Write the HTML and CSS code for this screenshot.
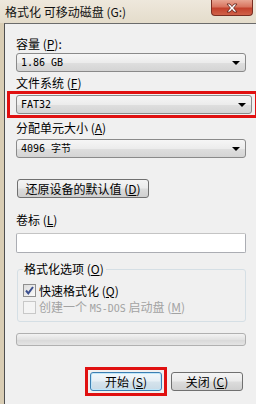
FILE: index.html
```html
<!DOCTYPE html>
<html lang="zh-CN">
<head>
<meta charset="utf-8">
<link rel="stylesheet" href="styles.css">
</head>
<body>
<div class="window">
  <div class="titlebar">
    <span class="title">格式化 可移动磁盘 (G:)</span>
    <div class="close">
      <svg width="42" height="16" viewBox="0 0 42 16">
        <path d="M16 4 L19 4 L21 6.5 L23 4 L26 4 L22.6 8 L26 12 L23 12 L21 9.5 L19 12 L16 12 L19.4 8 Z" fill="#fff" stroke="#5a1d14" stroke-width="0.8" stroke-linejoin="round"/>
      </svg>
    </div>
  </div>
  <div class="frame">
    <div class="content">
      <div class="label">容量 (<u>P</u>):</div>
      <div class="combo"><span class="val">1.86 GB</span><span class="arrow"></span></div>
      <div class="label l2">文件系统 (<u>F</u>)</div>
      <div class="hilite">
        <div class="combo"><span class="val">FAT32</span><span class="arrow"></span></div>
      </div>
      <div class="label l3">分配单元大小 (<u>A</u>)</div>
      <div class="combo c3"><span class="val">4096 字节</span><span class="arrow"></span></div>
      <div class="btn restore">还原设备的默认值 (<u>D</u>)</div>
      <div class="label l4">卷标 (<u>L</u>)</div>
      <div class="textbox"></div>
      <fieldset class="group">
        <legend>格式化选项 (<u>O</u>)</legend>
        <div class="row r1"><span class="cb checked"><svg width="11" height="11" viewBox="0 0 11 11"><path d="M2 5.5 L4.3 8.3 L9 2" fill="none" stroke="#3b4f8e" stroke-width="2"/></svg></span><span>快速格式化 (<u>Q</u>)</span></div>
        <div class="row r2 disabled"><span class="cb"></span><span>创建一个 <span class="mono">MS-DOS</span> 启动盘 (<u>M</u>)</span></div>
      </fieldset>
      <div class="progress"></div>
      <div class="buttons">
        <div class="redbox"><div class="btn act start">开始 (<u>S</u>)</div></div>
        <div class="btn act">关闭 (<u>C</u>)</div>
      </div>
    </div>
  </div>
</div>
</body>
</html>
```
FILE: styles.css
```css
html, body {
  margin: 0;
  padding: 0;
}
body {
  width: 256px;
  height: 404px;
  overflow: hidden;
  font-family: "Noto Sans CJK SC", "Noto Sans", sans-serif;
  font-size: 12px;
  color: #000;
}
.window {
  width: 256px;
  height: 404px;
  display: flex;
  flex-direction: column;
  background: #d9cdb4;
}
.titlebar {
  height: 23px;
  flex: none;
  display: flex;
  align-items: flex-start;
  padding-left: 5px;
  background: linear-gradient(#eee8dc, #e4dccb);
}
.title {
  line-height: 24px;
  font-size: 12px;
  color: #111;
}
.close {
  margin-left: auto;
  margin-right: 3px;
  width: 40px;
  height: 15px;
  border: 1px solid #7a2e22;
  border-top: none;
  border-radius: 0 0 4px 4px;
  background: linear-gradient(#e8a592 0%, #d87560 45%, #c3412c 55%, #d0624a 100%);
  overflow: hidden;
}
.close svg {
  display: block;
  margin-left: -1px;
}
.frame {
  flex: 1;
  margin-left: 4px;
  border-left: 1px solid #4f4f4f;
  border-top: 1px solid #6b6b6b;
  background: #f0f0f0;
  display: flex;
  flex-direction: column;
}
.content {
  padding: 13px 10px 0 11px;
  display: flex;
  flex-direction: column;
}
.label {
  line-height: 14px;
  height: 14px;
  white-space: nowrap;
}
.label u, .btn u, legend u, .row u {
  text-decoration: underline;
  text-underline-offset: 1px;
}
.combo {
  margin-top: 2px;
  height: 17px;
  border: 1px solid #8a8a8a;
  border-radius: 3px;
  background: linear-gradient(#f6f6f6 0%, #ececec 50%, #dedede 55%, #d4d4d4 100%);
  display: flex;
  align-items: center;
  padding-left: 4px;
}
.val {
  font-family: "DejaVu Sans Mono", "Noto Sans CJK SC", monospace;
  font-size: 10px;
  line-height: 17px;
}
.arrow {
  margin-left: auto;
  margin-right: 5px;
  width: 0;
  height: 0;
  border-left: 4px solid transparent;
  border-right: 4px solid transparent;
  border-top: 4px solid #000;
}
.l2 { margin-top: 4px; }
.hilite {
  margin-top: 1px;
  margin-left: -9px;
  width: 236px;
  border: 3px solid #e01010;
  padding: 1px 3px 1px 6px;
}
.hilite .combo { margin-top: 0; }
.l3 { margin-top: 3px; }
.c3 { margin-top: 4px; }
.btn {
  height: 17px;
  border: 1px solid #707070;
  border-radius: 3px;
  background: linear-gradient(#f4f4f4 0%, #ebebeb 48%, #dcdcdc 52%, #cfcfcf 100%);
  display: flex;
  align-items: center;
  justify-content: center;
  line-height: 17px;
  white-space: nowrap;
}
.restore {
  margin-top: 21px;
  width: 130px;
  margin-left: 1px;
}
.l4 { margin-top: 15px; }
.textbox {
  margin-top: 6px;
  height: 18px;
  border: 1px solid #abadb3;
  border-top-color: #c4c4c4;
  background: #fff;
  border-radius: 2px;
}
.group {
  margin: 9px 0 0 1px;
  padding: 0 0 6px 5px;
  border: 1px solid #d5dfe5;
  border-radius: 3px;
  min-inline-size: 0;
}
.group legend {
  padding: 0 2px 0 1px;
  line-height: 14px;
  height: 14px;
}
.row {
  height: 15px;
  display: flex;
  align-items: center;
  gap: 3px;
  line-height: 15px;
  white-space: nowrap;
}
.r1 { margin-top: 7px; }
.r2 { margin-top: 2px; }
.cb {
  width: 11px;
  height: 11px;
  border: 1px solid #8f8f8f;
  background: linear-gradient(135deg, #dcdcdc, #fafafa);
  display: flex;
  align-items: center;
  justify-content: center;
}
.disabled { color: #a3a3a3; }
.disabled .cb {
  border-color: #c8c8c8;
  background: #f4f4f4;
}
.mono {
  font-family: "DejaVu Sans Mono", monospace;
  font-size: 10px;
}
.progress {
  margin-top: 11px;
  height: 11px;
  border: 1px solid #b0b0b0;
  border-radius: 3px;
  background: linear-gradient(#f3f3f3, #e2e2e2 50%, #d9d9d9 55%, #e4e4e4);
}
.buttons {
  margin-top: 21px;
  margin-right: 3px;
  display: flex;
  justify-content: flex-end;
  align-items: center;
  gap: 4px;
}
.redbox {
  border: 3px solid #e01010;
  padding: 2px;
}
.act { width: 70px; }
.start {
  border-color: #3c7fb1;
  background: linear-gradient(#f2f8fb 0%, #e6eff5 48%, #d5e3ec 52%, #c8dae6 100%);
  box-shadow: inset 0 0 0 1px #bfe6fa;
}
```
